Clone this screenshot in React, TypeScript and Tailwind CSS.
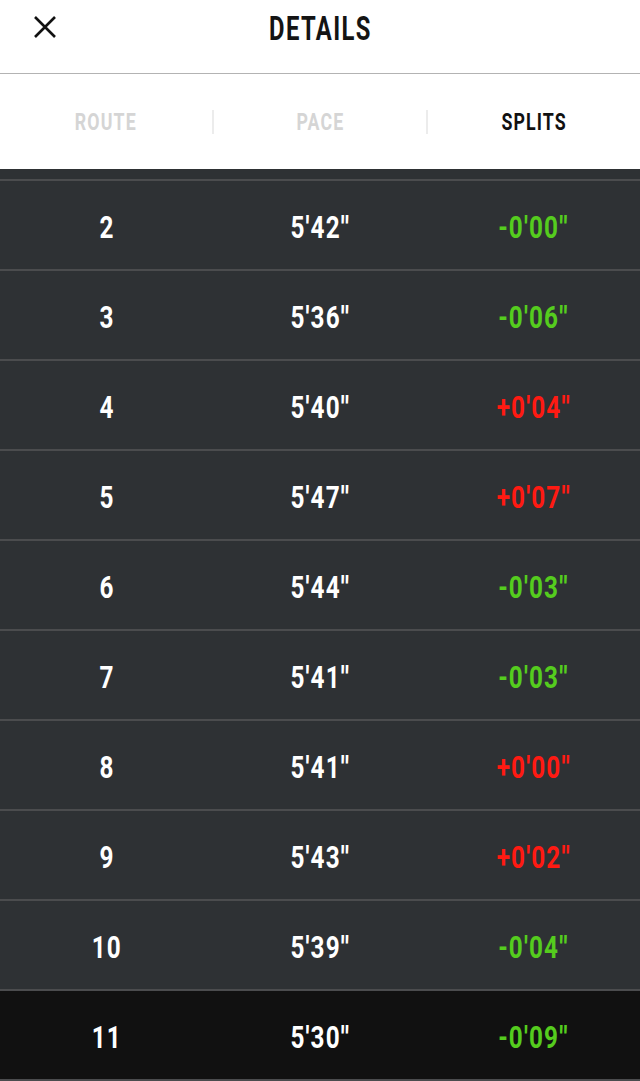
import React from "react";

type Row = { n: string; pace: string; split: string; up: boolean };

const rows: Row[] = [
  { n: "2", pace: "5'42''", split: "-0'00''", up: false },
  { n: "3", pace: "5'36''", split: "-0'06''", up: false },
  { n: "4", pace: "5'40''", split: "+0'04''", up: true },
  { n: "5", pace: "5'47''", split: "+0'07''", up: true },
  { n: "6", pace: "5'44''", split: "-0'03''", up: false },
  { n: "7", pace: "5'41''", split: "-0'03''", up: false },
  { n: "8", pace: "5'41''", split: "+0'00''", up: true },
  { n: "9", pace: "5'43''", split: "+0'02''", up: true },
  { n: "10", pace: "5'39''", split: "-0'04''", up: false },
];

function Cell({ children, color }: { children: React.ReactNode; color: string }) {
  return (
    <div className="flex-1 flex items-center justify-center pt-1">
      <span
        className={`inline-block scale-x-[0.76] text-[32px] font-bold leading-none tracking-[1.5px] ${color}`}
      >
        {children}
      </span>
    </div>
  );
}

function SplitRow({ r, last }: { r: Row; last?: boolean }) {
  return (
    <div
      className={
        last
          ? "flex h-[92px] border-y-2 border-[#4b4c4e] bg-[#111111]"
          : "flex h-[90px] border-t-2 border-[#4b4c4e]"
      }
    >
      <Cell color="text-white">{r.n}</Cell>
      <Cell color="text-white">{r.pace}</Cell>
      <Cell color={r.up ? "text-[#ff1a12]" : "text-[#55cc1e]"}>{r.split}</Cell>
    </div>
  );
}

export default function App() {
  return (
    <div className="w-[640px] h-[1081px] overflow-hidden bg-[#2e3134] font-['Roboto',sans-serif]">
      <div className="h-[74px] border-b border-[#b3b3b3] bg-white grid grid-cols-[1fr_auto_1fr] items-center pb-[20px]">
        <div className="pl-[33px] flex items-center">
          <svg width="24" height="24" viewBox="0 0 24 24">
            <path d="M2 2 L22 22 M22 2 L2 22" stroke="#111" strokeWidth="2.6" strokeLinecap="butt" fill="none" />
          </svg>
        </div>
        <span className="inline-block scale-x-[0.7] text-[34px] font-bold leading-none tracking-[2px] text-[#141414] pt-[2px]">
          DETAILS
        </span>
        <div />
      </div>
      <div className="h-[95px] bg-white flex items-center">
        <div className="flex-1 flex justify-center">
          <span className="inline-block scale-x-[0.74] text-[24px] font-bold leading-none tracking-[1.5px] text-[#d5d5d5]">
            ROUTE
          </span>
        </div>
        <div className="w-[2px] h-[24px] bg-[#ececec]" />
        <div className="flex-1 flex justify-center">
          <span className="inline-block scale-x-[0.74] text-[24px] font-bold leading-none tracking-[1.5px] text-[#d5d5d5]">
            PACE
          </span>
        </div>
        <div className="w-[2px] h-[24px] bg-[#ececec]" />
        <div className="flex-1 flex justify-center">
          <span className="inline-block scale-x-[0.74] text-[24px] font-bold leading-none tracking-[1.5px] text-[#111111]">
            SPLITS
          </span>
        </div>
      </div>
      <div className="h-[10px]" />
      {rows.map((r) => (
        <SplitRow key={r.n} r={r} />
      ))}
      <SplitRow r={{ n: "11", pace: "5'30''", split: "-0'09''", up: false }} last />
    </div>
  );
}
